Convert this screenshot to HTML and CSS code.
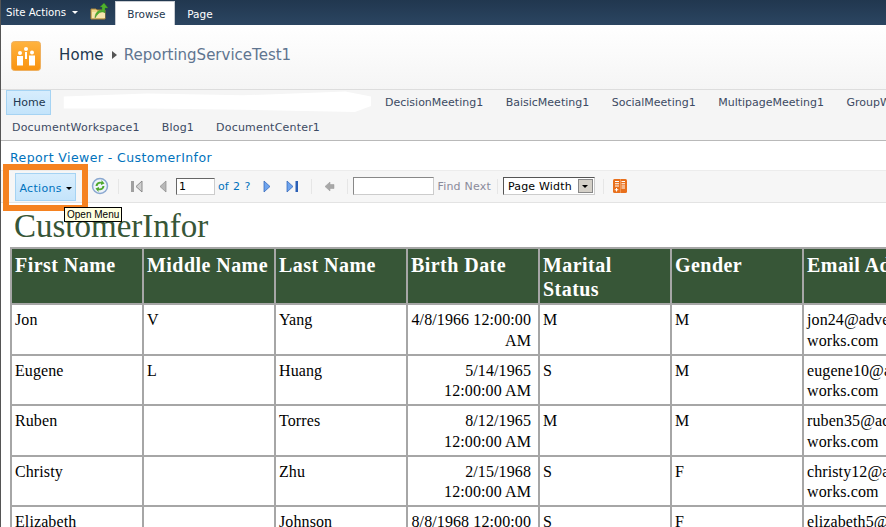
FILE: index.html
```html
<!DOCTYPE html>
<html lang="en">
<head>
<meta charset="utf-8">
<title>ReportingServiceTest1 - CustomerInfor</title>
<link rel="stylesheet" href="styles.css">
</head>
<body>
<div class="page">
  <header class="ribbon">
    <span class="site-actions">Site Actions <i class="caret caret-white"></i></span>
    <svg class="folder" width="18" height="17" viewBox="0 0 18 17"><path d="M1 6h5l1 1h8v9H1z" fill="#f0d58a" stroke="#a9853a"/><path d="M2 9h13v6H2z" fill="#f7e6ae"/><path d="M5 15c0-5 3-8 7-8V4H10l4-4 4 5h-3v5c-1-1-2-1-3-1-3 0-5 3-7 6z" fill="#4fb02e" stroke="#2f7f1c" stroke-width=".4"/></svg>
    <span class="tab tab-active">Browse</span>
    <span class="tab">Page</span>
  </header>
  <section class="title-area">
    <svg class="logo" width="30" height="30" viewBox="0 0 30 30"><defs><linearGradient id="lg" x1="0" y1="0" x2="0" y2="1"><stop offset="0" stop-color="#ffb340"/><stop offset="1" stop-color="#f9930f"/></linearGradient></defs><rect x=".5" y=".5" width="29" height="29" rx="3" fill="url(#lg)" stroke="#eeb060"/><g fill="#fff"><circle cx="9" cy="12" r="2"/><circle cx="15" cy="8" r="2"/><circle cx="21" cy="11.500" r="2"/><rect x="6" y="15" width="6" height="9.500"/><rect x="18" y="14.500" width="6" height="10"/><rect x="14" y="11" width="2" height="7"/></g></svg>
    <nav class="crumbs"><span class="crumb-home">Home</span><i class="crumb-sep"></i><span class="crumb-site">ReportingServiceTest1</span></nav>
  </section>
  <nav class="topnav">
    <div class="nav-row nav-row-one">
      <span class="nav-home">Home</span>
      <span class="nav-blank"></span>
      <a class="nav-link">DecisionMeeting1</a>
      <a class="nav-link">BaisicMeeting1</a>
      <a class="nav-link">SocialMeeting1</a>
      <a class="nav-link">MultipageMeeting1</a>
      <a class="nav-link">GroupWorkSite1</a>
    </div>
    <div class="nav-row nav-row-two">
      <a class="nav-link">DocumentWorkspace1</a>
      <a class="nav-link">Blog1</a>
      <a class="nav-link">DocumentCenter1</a>
    </div>
  </nav>
  <h1 class="viewer-title">Report Viewer - CustomerInfor</h1>
  <div class="toolbar">
    <button class="actions">Actions <i class="caret"></i></button>
    <svg class="refresh" width="18" height="18" viewBox="0 0 18 18"><circle cx="9" cy="9" r="7.500" fill="#eef3fa" stroke="#8aa8d0" stroke-width="1.500"/><path d="M4.500 9a4.500 4.500 0 0 1 6-4V3l3 3.500L10 8V6.500A3 3 0 0 0 6.500 9z" fill="#4fa82e"/><path d="M13.500 9a4.500 4.500 0 0 1-6 4v2l-3-3.500L8 10v1.500A3 3 0 0 0 11.500 9z" fill="#4fa82e"/></svg>
    <i class="sep sep-a"></i>
    <svg class="pg pg-first" width="13" height="13" viewBox="0 0 13 13"><rect x="1" y="1" width="3" height="11" fill="#a0a0a0"/><path d="M12 1v11L6 6.500z" fill="#d0d0d0" stroke="#8a8a8a"/></svg>
    <svg class="pg pg-prev" width="8" height="13" viewBox="0 0 8 13"><path d="M7 1v11L1 6.500z" fill="#b8b8b8" stroke="#8a8a8a" stroke-width=".7"/></svg>
    <input class="page-input" value="1" aria-label="Page">
    <span class="of">of 2 ?</span>
    <svg class="pg pg-next" width="8" height="13" viewBox="0 0 8 13"><path d="M1 1v11l6-5.500z" fill="#6ea4ee" stroke="#2a5fb5" stroke-width=".7"/></svg>
    <svg class="pg pg-last" width="13" height="13" viewBox="0 0 13 13"><path d="M1 1v11l6-5.500z" fill="#6ea4ee" stroke="#2a5fb5" stroke-width=".7"/><rect x="9.500" y="1" width="2.500" height="11" fill="#2a5fb5"/></svg>
    <i class="sep sep-b"></i>
    <svg class="pg pg-back" width="11" height="11" viewBox="0 0 11 11"><path d="M6 1v2.500h4v4H6V10L1 5.500z" fill="#a8a8a8" stroke="#999" stroke-width=".5"/></svg>
    <i class="sep sep-c"></i>
    <input class="find-input" aria-label="Find">
    <span class="find-next">Find Next</span>
    <i class="sep sep-d"></i>
    <span class="zoom-select"><span class="zoom-text">Page Width</span><span class="zoom-arrow"><i class="caret"></i></span></span>
    <i class="sep sep-e"></i>
    <svg class="export" width="14" height="14" viewBox="0 0 14 14"><rect width="14" height="14" rx="1.500" fill="#e8701c"/><path d="M7 0h.700v14H7z" fill="#f6a66a"/><path d="M2 2h4v1H2zM2 4.200h4v1H2zM2 6.400h4v1H2zM8.500 2H12v1H8.500zM8.500 4.200H12v1H8.500zM8.500 6.400H12v1H8.500zM8.500 8.600H12v1H8.500zM3 9h1v1.200h1.300v1H4v1.300H3v-1.300H1.700v-1H3z" fill="#fff"/></svg>
  </div>
  <main class="report">
    <h2 class="report-title">CustomerInfor</h2>
    <table class="grid">
      <colgroup><col class="c"><col class="c"><col class="c"><col class="c"><col class="c"><col class="c"><col class="c"></colgroup>
      <thead>
        <tr><th>First Name</th><th>Middle Name</th><th>Last Name</th><th>Birth Date</th><th>Marital Status</th><th>Gender</th><th class="one-line">Email Address</th></tr>
      </thead>
      <tbody>
        <tr><td>Jon</td><td>V</td><td>Yang</td><td class="date">4/8/1966 12:00:00 AM</td><td>M</td><td>M</td><td>jon24@adventure-<br>works.com</td></tr>
        <tr><td>Eugene</td><td>L</td><td>Huang</td><td class="date">5/14/1965 12:00:00 AM</td><td>S</td><td>M</td><td>eugene10@adventure-<br>works.com</td></tr>
        <tr><td>Ruben</td><td></td><td>Torres</td><td class="date">8/12/1965 12:00:00 AM</td><td>M</td><td>M</td><td>ruben35@adventure-<br>works.com</td></tr>
        <tr><td>Christy</td><td></td><td>Zhu</td><td class="date">2/15/1968 12:00:00 AM</td><td>S</td><td>F</td><td>christy12@adventure-<br>works.com</td></tr>
        <tr><td>Elizabeth</td><td></td><td>Johnson</td><td class="date">8/8/1968 12:00:00 AM</td><td>S</td><td>F</td><td>elizabeth5@adventure-<br>works.com</td></tr>
      </tbody>
    </table>
  </main>
  <div class="highlight"></div>
  <div class="tooltip">Open Menu</div>
</div>
</body>
</html>
```

FILE: styles.css
```css
* { box-sizing: border-box; }
html, body { margin: 0; padding: 0; height: 100%; overflow: hidden; background: #fff; }
body { font-family: "DejaVu Sans", Verdana, sans-serif; font-size: 11px; color: #333; }
.page { position: relative; width: 886px; height: 527px; overflow: hidden; border-left: 1px solid #555; }

.caret { display: inline-block; width: 0; height: 0; border: 3px solid transparent; border-top: 3px solid #000; border-bottom: 0; vertical-align: middle; }
.caret-white { border-top-color: #fff; margin-left: 3px; }

.ribbon { display: flex; align-items: flex-end; height: 25px; background: linear-gradient(#21374f, #2b4561); color: #fff; }
.site-actions { align-self: center; margin: -1px 0 0 5px; font-size: 10.200px; white-space: nowrap; }
.folder { align-self: center; margin: -2px 0 0 12px; }
.tab { display: block; height: 21px; padding: 4px 12px 0; font-size: 10.500px; color: #fff; }
.tab-active { margin-left: 7px; width: 60px; height: 24px; padding: 6px 0 0 11px; background: #fff; color: #23374f; border: 1px solid #c8ccd2; border-bottom: 0; }

.title-area { display: flex; align-items: center; height: 64px; padding: 0 0 2px 10px; background: linear-gradient(#fff, #f5f5f5); }
.logo { flex: none; }
.crumbs { display: flex; align-items: center; margin: -3px 0 0 18px; font-size: 15px; white-space: nowrap; }
.crumb-home { color: #21374f; letter-spacing: .1px; }
.crumb-sep { width: 0; height: 0; margin: 0 7px 0 8px; border: 4px solid transparent; border-left: 5px solid #555; border-right: 0; }
.crumb-site { color: #5f7590; }

.topnav { height: 52px; background: #f5f5f5; border-top: 1px solid #ddd; border-bottom: 1px solid #b9b9b9; font-size: 11px; }
.nav-row { display: flex; align-items: center; white-space: nowrap; }
.nav-row-one { height: 25px; }
.nav-row-two { height: 25px; padding-left: 11px; gap: 22px; letter-spacing: .2px; }
.nav-link { flex: none; color: #3c4a63; }
.nav-row-one .nav-link { margin-right: 22.500px; }
.nav-home { flex: none; width: 45px; height: 25px; margin-left: 5px; padding: 5px 0 0 6px; background: linear-gradient(#d7edfd, #c3e4fb); border: 1px solid #a5d3f3; color: #21374f; }
.nav-blank { flex: none; width: 320px; height: 24px; margin: 0 14px 0 0; background: #fff; clip-path: polygon(4% 25%, 30% 12%, 60% 20%, 92% 4%, 100% 25%, 100% 65%, 95% 90%, 60% 80%, 30% 75%, 4% 75%); }

.viewer-title { margin: 0; height: 29px; padding: 9px 0 0 9px; font-size: 12.500px; font-weight: 400; color: #0072bc; letter-spacing: .42px; white-space: nowrap; }

.toolbar { position: relative; display: flex; align-items: center; height: 33px; padding-bottom: 1px; background: #f6f6f6; border-top: 1px solid #ececec; border-bottom: 1px solid #e3e3e3; white-space: nowrap; }
.actions { flex: none; width: 61px; height: 28px; margin: 1px 0 0 14px; padding: 3px 0 0; font: 11px "DejaVu Sans", sans-serif; letter-spacing: .3px; color: #0072bc; background: linear-gradient(#d9eefd, #c4e4fb); border: 1px solid #a5d3f3; }
.refresh { flex: none; margin-left: 15px; }
.sep { flex: none; width: 1px; height: 15px; background: #e6e6e6; }
.sep-a { margin-left: 9px; }
.pg { flex: none; }
.pg-first { margin-left: 11px; }
.pg-prev { margin-left: 16px; }
.page-input { flex: none; width: 39px; height: 17px; margin-left: 9px; padding: 0 2px; font: 11px "DejaVu Sans", sans-serif; color: #000; background: #fff; border: 1px solid; border-color: #666 #ccc #ccc #666; }
.of { margin-left: 3px; color: #0072bc; font-size: 11px; word-spacing: 1px; }
.pg-next { margin-left: 13px; }
.pg-last { margin-left: 15px; }
.sep-b { margin-left: 12px; }
.pg-back { margin-left: 12px; }
.sep-c { margin-left: 12px; }
.find-input { flex: none; width: 81px; height: 18px; margin-left: 5px; border: 1px solid; border-color: #888 #ccc #ccc #888; background: #fff; }
.find-next { margin-left: 3px; color: #8a8a9a; font-size: 11px; letter-spacing: .2px; }
.sep-d { margin-left: 6px; }
.zoom-select { flex: none; display: flex; align-items: center; justify-content: space-between; width: 92px; height: 18px; margin-left: 5px; padding: 0 1px 0 4px; color: #000; font-size: 11px; letter-spacing: .2px; background: #fff; border: 1px solid; border-color: #555 #ccc #ccc #555; }
.zoom-arrow { display: flex; align-items: center; justify-content: center; width: 15px; height: 14px; background: #d4d0c8; border: 1px solid #888; }
.sep-e { margin-left: 8px; }
.export { flex: none; margin-left: 9px; }

.report { padding: 0 0 0 9px; font-family: "Liberation Serif", "Times New Roman", serif; }
.report-title { margin: 0; height: 44px; padding: 5px 0 0 4px; font-size: 33px; line-height: 36px; font-weight: 400; color: #375637; white-space: nowrap; }
.grid { table-layout: fixed; width: 924px; border-collapse: collapse; border: 2px solid #a6a6a6; font-size: 16px; color: #000; }
.c { width: 132px; }
.grid th, .grid td { border: 2px solid #a6a6a6; vertical-align: top; text-align: left; }
.grid th { height: 56px; padding: 4px 3px 2px 3px; background: #375637; color: #fff; font-size: 20px; line-height: 24px; font-weight: 700; letter-spacing: .45px; }
.grid th.one-line { white-space: nowrap; }
.grid td { height: 50.500px; padding: 5px 3px 2.500px; line-height: 20.500px; letter-spacing: .1px; }
.grid td.date { padding: 5px 7px 2.500px 0; text-align: right; }

.highlight { position: absolute; left: 2px; top: 164px; width: 85px; height: 47px; border: 6px solid #f58220; }
.tooltip { position: absolute; left: 63px; top: 207px; height: 15px; padding: 0 2px; font: 10px/14px "Liberation Sans", Arial, sans-serif; color: #000; background: #ffffe1; border: 1px solid #000; white-space: nowrap; }
```
